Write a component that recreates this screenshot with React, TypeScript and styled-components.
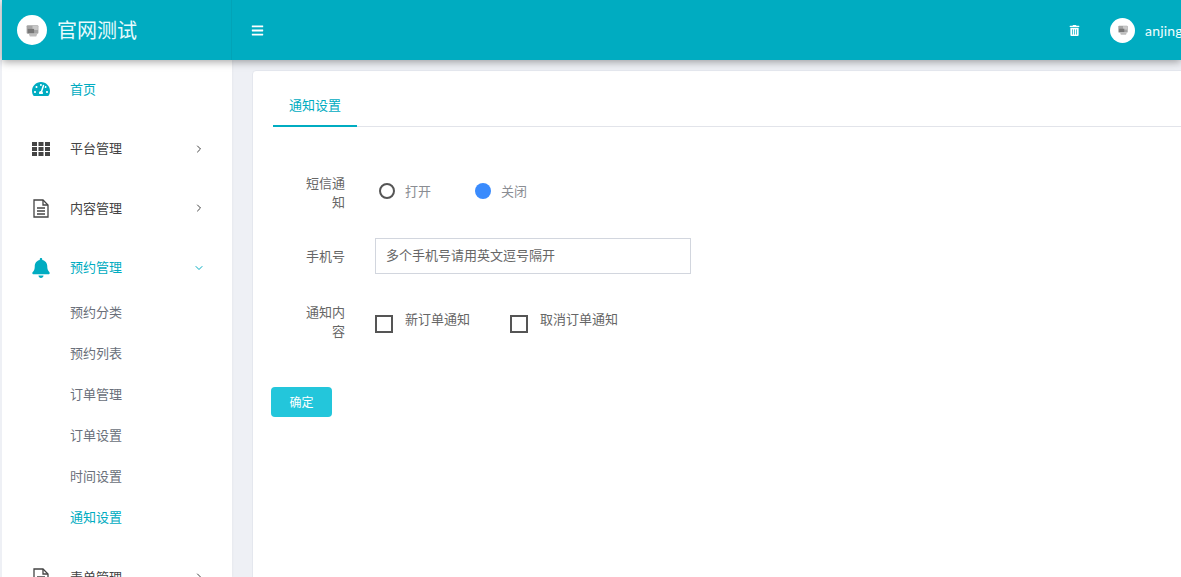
import React from "react";
import styled, { createGlobalStyle } from "styled-components";
import { FaTachometerAlt, FaBell, FaBars, FaTrashAlt } from "react-icons/fa";
import { ChevronRight, ChevronDown } from "lucide-react";

const Global = createGlobalStyle`
  html, body { margin: 0; padding: 0; height: 577px; overflow: hidden; background: #eef0f5; }
  * { box-sizing: border-box; }
  body { font-family: "Noto Sans CJK SC", "Noto Sans", sans-serif; font-size: 13px; color: #555; }
`;

const teal = "#00acc1";

const Page = styled.div`
  width: 1181px; height: 577px; overflow: hidden; display: flex; flex-direction: column;
  padding-left: 2px; position: relative;
`;
const Header = styled.header`
  height: 60px; flex: none; display: flex; align-items: center; background: ${teal};
  box-shadow: 0 2px 8px rgba(0,0,0,.35); position: relative; z-index: 2; color: #fff;
`;
const Brand = styled.div`
  width: 230px; height: 100%; flex: none; display: flex; align-items: center; padding-left: 15px; gap: 10px;
  border-right: 1px solid #02a3b7;
`;
const BrandName = styled.span`font-size: 20px; line-height: 1; color: #e9fbfd;`;
const Avatar = styled.span<{ $size: number }>`
  width: ${p => p.$size}px; height: ${p => p.$size}px; border-radius: 50%; background: #fff;
  display: inline-flex; align-items: center; justify-content: center; flex: none;
`;
const Burger = styled.span`display: flex; margin-left: 19px; font-size: 13px;`;
const HeaderRight = styled.div`margin-left: auto; display: flex; align-items: center; width: 113px; flex: none; overflow: hidden; white-space: nowrap;`;
const Trash = styled.span`display: flex; font-size: 11px; margin-right: 30px; margin-left: 1px;`;
const UserName = styled.span`font-family: "Lato", sans-serif; font-size: 14px; letter-spacing: .2px; margin-left: 10px; color: #f2feff;`;

const Body = styled.div`flex: 1; display: flex; min-height: 0; background: #eef0f5;`;
const Side = styled.nav`
  width: 230px; flex: none; background: #fff; overflow: hidden;
  box-shadow: 1px 0 2px rgba(0,0,0,.03);
`;
const MenuRow = styled.div<{ $active?: boolean }>`
  height: 59.5px; display: flex; align-items: center; padding-left: 30px; padding-right: 27px;
  color: ${p => (p.$active ? teal : "#444")};
`;
const MenuIcon = styled.span<{ $size?: number; $up?: number }>`
  width: 18px; display: flex; justify-content: center; font-size: ${p => p.$size ?? 18}px; margin-right: 20px;
  margin-top: ${p => -(p.$up ?? 0)}px;
`;
const MenuText = styled.span`flex: 1; line-height: 19px; margin-top: -3px;`;
const Caret = styled.span`display: flex; margin-top: -1px;`;
const SubList = styled.div`padding-bottom: 11px; margin-top: -7px;`;
const SubRow = styled.div<{ $active?: boolean }>`
  height: 41px; padding-left: 68px; display: flex; align-items: center; color: ${p => (p.$active ? teal : "#6a6f7a")};
`;

const Main = styled.main`flex: 1; min-width: 0; padding: 10px 0 0 20px; overflow: hidden;`;
const Card = styled.section`
  width: 1100px; height: 600px; background: #fff; border: 1px solid #e4e7ee; border-radius: 4px; padding: 0 0 0 20px;
`;
const Tabs = styled.div`height: 56px; display: flex; border-bottom: 1px solid #e2e4ea;`;
const Tab = styled.div`
  width: 84px; height: 56px; border-bottom: 2px solid ${teal}; color: ${teal};
  display: flex; align-items: center; justify-content: center; padding-top: 12px;
`;
const Form = styled.form`padding-top: 46px; margin-left: -2px;`;
const Row = styled.div<{ $gap: number }>`display: flex; align-items: center; margin-bottom: ${p => p.$gap}px;`;
const Label = styled.label<{ $up?: number }>`
  width: 74px; margin-right: 30px; padding-left: 33px; text-align: right; line-height: 19px; flex: none; color: #666;
  margin-top: ${p => -(p.$up ?? 0)}px;
`;
const Radio = styled.span<{ $on?: boolean }>`
  width: 16px; height: 16px; border-radius: 50%; flex: none; margin-left: ${p => (p.$on ? 0 : 4)}px; margin-top: -2px;
  background: ${p => (p.$on ? "#3a8bfd" : "#fff")}; border: ${p => (p.$on ? "0" : "2.5px solid #555")};
`;
const OptLabel = styled.span<{ $left: number; $right?: number }>`
  margin-left: ${p => p.$left}px; margin-right: ${p => p.$right ?? 0}px; color: #8a8d93; line-height: 19px; margin-top: -4px;
`;
const Input = styled.input`
  width: 316px; height: 36px; border: 1px solid #d2d6de; padding: 0 10px 3px; font: inherit; outline: none; color: #555;
  &::placeholder { color: #666; opacity: 1; }
`;
const Check = styled.span`width: 18px; height: 18px; border: 2.5px solid #555; flex: none; margin-top: 5px;`;
const CheckLabel = styled.span<{ $right?: number }>`
  margin-left: 12px; margin-right: ${p => p.$right ?? 0}px; color: #666; line-height: 19px; margin-top: -6px;
`;
const Submit = styled.button`
  width: 61px; height: 30px; border: 0; border-radius: 4px; background: #23c6db; color: #fff;
  font: inherit; font-size: 12px; padding: 0 0 2px; display: block; margin-top: 47px;
`;

const Logo = ({ s }: { s: number }) => (
  <svg width={s} height={s} viewBox="0 0 14 14" aria-hidden>
    <rect x="1.5" y="2" width="11" height="8" rx="1" fill="#a4a4a4" />
    <rect x="7" y="2.5" width="5" height="4" fill="#c8c8c8" />
    <rect x="2.5" y="5.5" width="6" height="4" fill="#777" />
    <path d="M3.5 10h8l-1 2.5h-6z" fill="#bdbdbd" />
  </svg>
);

const GridIcon = () => (
  <svg width="18" height="14" viewBox="0 0 18 14" fill="currentColor" aria-hidden>
    {[0, 5, 10].map(y => [0, 6.5, 13].map(x => <rect key={`${x}-${y}`} x={x} y={y} width="5" height="4" />))}
  </svg>
);

const FileIcon = () => (
  <svg width="16" height="19" viewBox="0 0 16 19" fill="none" stroke="currentColor" strokeWidth="1.3" aria-hidden>
    <path d="M1 1h9l5 5v12H1z" />
    <path d="M10 1v5h5" />
    <path d="M4 9h8M4 12h8M4 15h8" />
  </svg>
);

const Right = () => <ChevronRight size={12} strokeWidth={2} />;

export default function App() {
  return (
    <Page>
      <Global />
      <Header>
        <Brand>
          <Avatar $size={30}><Logo s={15} /></Avatar>
          <BrandName>官网测试</BrandName>
        </Brand>
        <Burger><FaBars /></Burger>
        <HeaderRight>
          <Trash><FaTrashAlt /></Trash>
          <Avatar $size={25}><Logo s={12} /></Avatar>
          <UserName>anjing</UserName>
        </HeaderRight>
      </Header>
      <Body>
        <Side>
          <MenuRow $active><MenuIcon $up={1}><FaTachometerAlt /></MenuIcon><MenuText>首页</MenuText></MenuRow>
          <MenuRow><MenuIcon><GridIcon /></MenuIcon><MenuText>平台管理</MenuText><Caret><Right /></Caret></MenuRow>
          <MenuRow><MenuIcon><FileIcon /></MenuIcon><MenuText>内容管理</MenuText><Caret><Right /></Caret></MenuRow>
          <MenuRow $active><MenuIcon $size={20}><FaBell /></MenuIcon><MenuText>预约管理</MenuText><Caret><ChevronDown size={12} strokeWidth={2} /></Caret></MenuRow>
          <SubList>
            <SubRow>预约分类</SubRow>
            <SubRow>预约列表</SubRow>
            <SubRow>订单管理</SubRow>
            <SubRow>订单设置</SubRow>
            <SubRow>时间设置</SubRow>
            <SubRow $active>通知设置</SubRow>
          </SubList>
          <MenuRow><MenuIcon><FileIcon /></MenuIcon><MenuText>表单管理</MenuText><Caret><Right /></Caret></MenuRow>
        </Side>
        <Main>
          <Card>
            <Tabs><Tab>通知设置</Tab></Tabs>
            <Form>
              <Row $gap={27}>
                <Label>短信通知</Label>
                <Radio />
                <OptLabel $left={10} $right={44}>打开</OptLabel>
                <Radio $on />
                <OptLabel $left={10}>关闭</OptLabel>
              </Row>
              <Row $gap={28}>
                <Label $up={2}>手机号</Label>
                <Input placeholder="多个手机号请用英文逗号隔开" />
              </Row>
              <Row $gap={0}>
                <Label>通知内容</Label>
                <Check />
                <CheckLabel $right={40}>新订单通知</CheckLabel>
                <Check />
                <CheckLabel>取消订单通知</CheckLabel>
              </Row>
              <Submit type="button">确定</Submit>
            </Form>
          </Card>
        </Main>
      </Body>
    </Page>
  );
}
